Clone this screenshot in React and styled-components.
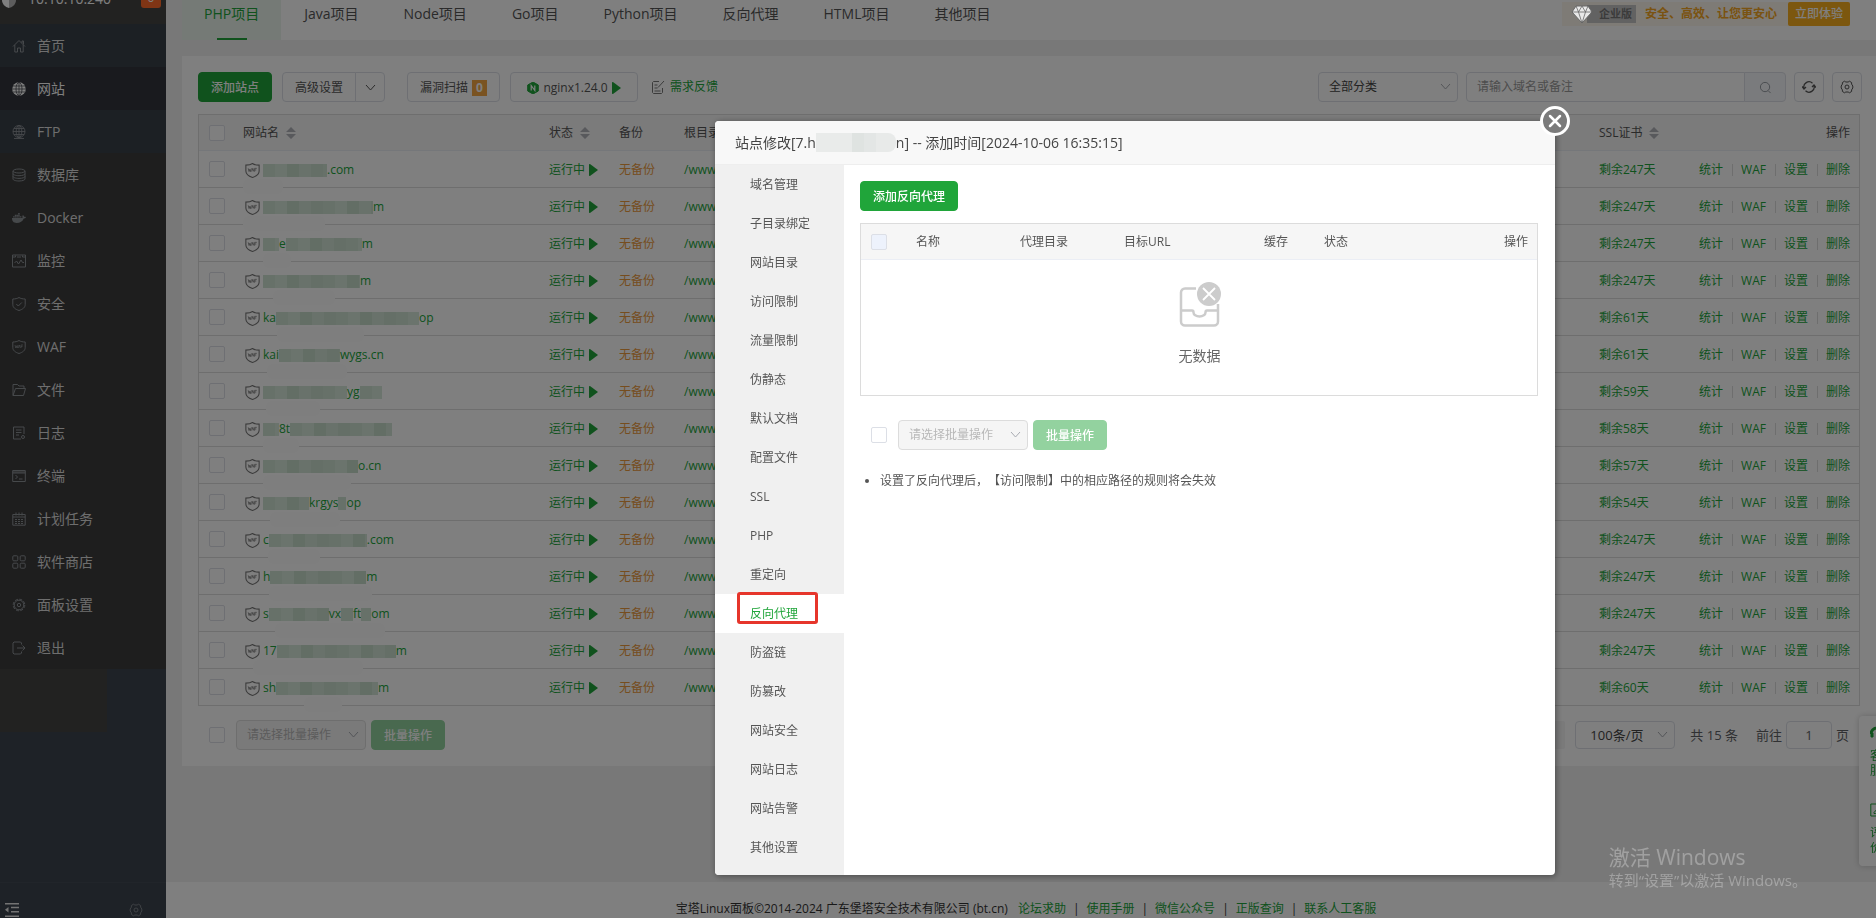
import React from 'react'
import styled, { createGlobalStyle } from "styled-components";
import { FaDocker } from "react-icons/fa";

const GlobalStyle = createGlobalStyle`
  * {
    box-sizing: border-box;
  }

  body {
    margin: 0;
    overflow: hidden;
    background: #f0f0f0;
    color: #555;
    font-family: "Open Sans", "Noto Sans CJK SC", sans-serif;
    font-size: 12px;
    line-height: 16px;
    text-spacing-trim: space-all;
  }

  button, input, select {
    font-family: inherit;
    font-size: 12px;
    line-height: 16px;
    color: inherit;
  }

  a {
    color: #20a53a;
    text-decoration: none;
  }

  ul {
    margin: 0;
    padding: 0;
    list-style: none;
  }
`;

const Shell = styled.div`
  display: flex;
  height: 100vh;
`;

/* ---------- sidebar ---------- */

const Sidebar = styled.aside`
  flex: none;
  width: 166px;
  display: flex;
  flex-direction: column;
  background: #3d454e;
`;

const ServerBar = styled.div`
  height: 24px;
  display: flex;
  align-items: flex-start;
  overflow: hidden;
  background: #454543;
  color: #fff;
  font-size: 14px;
`;

const ServerLogo = styled.svg`
  margin-left: 2px;
  margin-top: -6px;
`;

const ServerIp = styled.span`
  flex: 1;
  margin-left: 12px;
  margin-top: -9px;
`;

const ServerCount = styled.span`
  width: 20px;
  height: 20px;
  margin-right: 5px;
  margin-top: -12px;
  border-radius: 3px;
  background: #ff6a2a;
  font-size: 12px;
  line-height: 20px;
  text-align: center;
`;

const Nav = styled.nav`
  background: #3d3d3d;
`;

const NavLink = styled.a`
  display: flex;
  align-items: center;
  gap: 11px;
  height: 43px;
  padding-left: 12px;
  background: ${(p) => p.$bg || "transparent"};
  color: ${(p) => (p.$active ? "#fff" : "#dcdcdc")};
  font-size: 14px;

  svg {
    flex: none;
    color: ${(p) => (p.$active ? "#fff" : "#8d9297")};
  }
`;

const NavTail = styled.div`
  width: 107px;
  height: 63px;
  background: #454543;
`;

const SidebarFoot = styled.div`
  margin-top: auto;
  height: 36px;
  display: flex;
  align-items: flex-end;
  justify-content: space-between;
  padding: 0 23px 1px 5px;
  border-top: 1px solid #434b54;
  color: #e6e6e6;

  svg:last-child {
    color: #7d838a;
  }
`;

/* ---------- main area ---------- */

const Main = styled.main`
  flex: 1;
  min-width: 0;
  display: flex;
  flex-direction: column;
`;

const TabBar = styled.div`
  display: flex;
  justify-content: space-between;
  height: 40px;
  margin-left: 16px;
  padding-right: 26px;
  background: #fff;
`;

const Tabs = styled.div`
  display: flex;
  gap: 1px;
`;

const Tab = styled.a`
  display: flex;
  flex-direction: column;
  align-items: center;
  justify-content: space-between;
  padding: 0 22px;
  background: ${(p) => (p.$active ? "#eaf4ec" : "transparent")};
  color: ${(p) => (p.$active ? "#20a53a" : "#555")};
  font-size: 14px;
  line-height: 28px;

  &::after {
    content: "";
    width: 30px;
    height: 2px;
    background: ${(p) => (p.$active ? "#20a53a" : "transparent")};
  }
`;

const Upsell = styled.div`
  display: flex;
  align-items: center;
  height: 24px;
  margin-top: 2px;
  padding-left: 9px;
  background: #fdf6ec;
  color: #f5a623;
  font-weight: 700;

  > svg {
    z-index: 1;
    margin-right: -6px;
  }
`;

const Edition = styled.span`
  margin-right: 9px;
  padding: 0 4px 0 12px;
  background: #c4c4c4;
  color: #777;
  font-size: 11px;
  line-height: 18px;
`;

const TryButton = styled.button`
  height: 24px;
  margin-left: 11px;
  padding: 0 7px;
  border: 0;
  border-radius: 2px;
  background: #f9ae1e;
  color: #fff;
  font-weight: 500;
`;

const Card = styled.section`
  margin: 16px 0 0 16px;
  padding: 16px;
  background: #fff;
`;

const Toolbar = styled.div`
  display: flex;
  gap: 8px;
  margin: 0 -2px 12px 0;
`;

const Spacer = styled.div`
  flex: 1;
`;

const Button = styled.button`
  display: inline-flex;
  align-items: center;
  justify-content: center;
  gap: 4px;
  height: 30px;
  padding: 1px 12px 0;
  border: 1px solid #dcdfe6;
  border-radius: 4px;
  background: #fff;
  color: #555;
`;

const PrimaryButton = styled(Button)`
  border-color: #20a53a;
  background: #20a53a;
  color: #fff;
  font-weight: 500;

  &:disabled {
    border-color: #93d29f;
    background: #93d29f;
  }
`;

const IconButton = styled(Button)`
  width: 30px;
  padding: 0;
`;

const ButtonGroup = styled.div`
  display: flex;
  margin: 0 14px 0 2px;

  button:first-child {
    border-radius: 4px 0 0 4px;
  }

  button:last-child {
    margin-left: -1px;
    border-radius: 0 4px 4px 0;
  }
`;

const NginxButton = styled(Button)`
  width: 128px;
  margin: 0 5px 0 2px;
`;

const Count = styled.b`
  width: 15px;
  background: #f5a742;
  color: #fff;
  text-align: center;
`;

const Feedback = styled.a`
  display: flex;
  align-items: center;
  gap: 5px;

  svg {
    color: #777;
  }
`;

const SelectWrap = styled.div`
  position: relative;
  width: ${(p) => p.$width};

  select {
    appearance: none;
    width: 100%;
    height: ${(p) => p.$height || "30px"};
    padding: 0 10px;
    border: 1px solid #dcdfe6;
    border-radius: 4px;
    background: #fff;
    color: #444;
    opacity: 1;
  }

  select:disabled {
    background: #f5f5f5;
    border-color: #dcdcdc;
    color: #b8b8b8;
  }

  svg {
    position: absolute;
    right: 6px;
    top: 8px;
    color: #a8abb2;
    pointer-events: none;
  }
`;

const SearchBox = styled.div`
  display: flex;
  width: 320px;

  input {
    flex: 1;
    min-width: 0;
    padding: 0 10px;
    border: 1px solid #dcdfe6;
    border-radius: 4px 0 0 4px;
    background: #fff;
  }

  input::placeholder {
    color: #999;
  }

  button {
    width: 42px;
    margin-left: -1px;
    border-radius: 0 4px 4px 0;
    background: #f5f7fa;
    color: #8f949c;
  }
`;

const CheckBox = styled.input.attrs({ type: "checkbox" })`
  appearance: none;
  display: block;
  flex: none;
  width: 16px;
  height: 16px;
  margin: 0;
  border: 1px solid #dcdfe6;
  border-radius: 2px;
  background: ${(p) => (p.disabled ? "#edf2fc" : "#fff")};
`;

const Table = styled.table`
  width: 100%;
  table-layout: fixed;
  border-collapse: separate;
  border-spacing: 0;
  border: 1px solid #dcdcdc;
  border-bottom: 0;

  th, td {
    height: 37px;
    padding: 2px 8px 0;
    border-bottom: 1px solid #dcdcdc;
    font-weight: 400;
    text-align: left;
    white-space: nowrap;
  }

  th {
    height: 36px;
    padding-top: 0;
    border-bottom-color: #ebeef5;
    background: #f6f6f6;
    color: #555;
  }

  th:first-child, td:first-child {
    padding: 0 10px;
  }

  th:last-child, td:last-child {
    padding-right: 9px;
    text-align: right;
  }
`;

const Sortable = styled.span`
  display: flex;
  align-items: center;
  gap: 7px;
`;

const NameCell = styled.td`
  position: relative;
`;

const SiteName = styled.a`
  display: flex;
  align-items: center;
  padding-left: 2px;

  svg {
    flex: none;
    margin-right: 3px;
    color: #777;
  }
`;

const Mosaic = styled.span`
  flex: none;
  height: 13px;
  background: repeating-linear-gradient(
    90deg,
    #cfe3d3 0 12px,
    #d6e8da 12px 24px,
    #c6dccb 24px 36px,
    #d2e4d6 36px 48px,
    #cadfce 48px 60px
  );
`;

const Smear = styled.span`
  position: absolute;
  bottom: -7px;
  height: 15px;
  border-radius: 6px;
  background: #fdfdfd;
`;

const Running = styled.a`
  display: flex;
  align-items: center;
  gap: 4px;
`;

const Unsaved = styled.a`
  color: #ec9a3c;
`;

const Actions = styled.div`
  display: flex;
  justify-content: flex-end;

  a + a {
    margin-left: 9px;
    padding-left: 8px;
    border-left: 1px solid #dcdcdc;
  }

  a {
    height: 12px;
    line-height: 12px;
  }
`;

const TableFoot = styled.div`
  display: flex;
  align-items: center;
  gap: 5px;
  margin-top: ${(p) => p.$top};
  padding-left: 11px;
`;

const BatchSelect = styled(SelectWrap)`
  margin-left: 6px;
`;

const Pager = styled.div`
  display: flex;
  align-items: center;
  margin-left: auto;
  padding-right: 11px;
  color: #606266;
  font-size: 13px;

  select {
    padding-left: 14px;
    font-size: 13px;
  }

  svg {
    top: 7px;
  }

  input {
    width: 46px;
    height: 28px;
    margin: 0 4px;
    border: 1px solid #dcdfe6;
    border-radius: 4px;
    background: #fff;
    font-size: 13px;
    text-align: center;
  }
`;

const NextPage = styled.button`
  width: 28px;
  height: 28px;
  margin-right: 10px;
  border: 0;
  border-radius: 2px;
  background: #f4f4f5;
`;

const Total = styled.span`
  margin: 0 18px 0 15px;
`;

const Footer = styled.footer`
  flex: none;
  display: flex;
  justify-content: center;
  height: 36px;
  margin-top: auto;
  padding-top: 19px;
  padding-left: 10px;
  background: #fff;
  color: #333;

  a:first-of-type {
    margin-left: 10px;
  }

  a + a {
    margin-left: 7px;
  }

  a + a::before {
    content: "|";
    margin-right: 7px;
    color: #333;
  }
`;

/* ---------- layers over the page ---------- */

const SideDock = styled.div`
  position: fixed;
  right: -25px;
  bottom: 52px;
  width: 42px;
  height: 150px;
  padding: 10px 19px 0 11px;
  border-radius: 4px;
  background: #fff;
  box-shadow: 0 0 6px rgba(0, 0, 0, .2);
`;

const DockLink = styled.a`
  display: block;
  height: 77px;
  line-height: 15px;

  svg {
    display: block;
    margin-bottom: 8px;
  }
`;

const Mask = styled.div`
  position: fixed;
  inset: 0;
  background: rgba(0, 0, 0, .5);
`;

const Dialog = styled.div`
  position: fixed;
  left: 715px;
  top: 121px;
  width: 840px;
  border-radius: 4px;
  background: #fff;
  box-shadow: 1px 1px 6px rgba(0, 0, 0, .4);
`;

const DialogTitle = styled.h1`
  display: flex;
  align-items: center;
  height: 44px;
  margin: 0;
  padding: 0 20px;
  border-bottom: 1px solid #eee;
  border-radius: 4px 4px 0 0;
  background: #f8f8f8;
  color: #444;
  font-size: 14px;
  font-weight: 400;
`;

const TitleMosaic = styled.span`
  width: 80px;
  height: 19px;
  border-radius: 0 8px 8px 0;
  background: linear-gradient(90deg, #e9ebea 0 36px, #dfe3e1 36px 48px, #e3e6e5 48px 60px, #e8eae9 60px);
`;

const CloseButton = styled.button`
  position: absolute;
  top: -15px;
  right: -15px;
  width: 30px;
  height: 30px;
  padding: 0;
  border: 3px solid #fff;
  border-radius: 50%;
  background: #7b7b7b;
  color: #fff;

  svg {
    display: block;
    margin: 0 auto;
  }
`;

const DialogBody = styled.div`
  display: flex;
`;

const Menu = styled.ul`
  width: 129px;
  padding-bottom: 8px;
  border-radius: 0 0 0 4px;
  background: #f0f0f0;
`;

const MenuItem = styled.li`
  position: relative;
  background: ${(p) => (p.$active ? "#fff" : "transparent")};

  a {
    display: block;
    padding-left: 35px;
    color: ${(p) => (p.$active ? "#20a53a" : "#555")};
    line-height: 39px;
  }
`;

const Highlight = styled.span`
  position: absolute;
  left: 22px;
  top: -2px;
  width: 81px;
  height: 32px;
  border: 3px solid #e6352b;
  border-radius: 3px;
  pointer-events: none;
`;

const Pane = styled.div`
  flex: 1;
  padding: 16px 17px 16px 16px;
`;

const ProxyTable = styled(Table)`
  margin-top: 12px;

  td {
    height: 136px;
    text-align: center !important;
    vertical-align: top;
  }
`;

const Empty = styled.div`
  display: flex;
  flex-direction: column;
  align-items: center;
  gap: 20px;
  padding-top: 22px;
  color: #666;
  font-size: 14px;
`;

const Notes = styled.ul`
  margin-top: 23px;
  padding-left: 20px;
  list-style: disc;
`;

const Watermark = styled.div`
  position: fixed;
  right: 69px;
  bottom: 28px;
  color: rgba(255, 255, 255, .3);
  font-size: 15px;
  line-height: 20px;

  p {
    margin: 0;
  }

  p:first-child {
    font-size: 21px;
    line-height: 26px;
  }
`;

/* ---------- icons ---------- */

const Icon = ({ size = 14, children, ...rest }) => (
  <svg width={size} height={size} viewBox="0 0 14 14" fill="none" stroke="currentColor" strokeWidth="1" aria-hidden="true" {...rest}>
    {children}
  </svg>
);

const Gear = ({ size = 14 }) => (
  <Icon size={size}>
    <path d="M4.6 1.2 5.8 2h2.4l1.2-.8 2.2 1.3v1.6L12.8 6v2l-1.2 1.9v1.6l-2.2 1.3-1.2-.8H5.8l-1.2.8-2.2-1.3V9.9L1.200 8V6l1.200-1.900V2.500z" />
    <circle cx="7" cy="7" r="2" />
  </Icon>
);

const shieldPath = "M7 .5C5.500 1.600 3 2 .8 2v5.500c0 3 2.500 4.800 6.200 6 3.700-1.200 6.200-3 6.200-6V2C11 2 8.500 1.600 7 .5z";

const WafShield = ({ size = 14 }) => (
  <Icon size={size}>
    <path d={shieldPath} />
    <path d="M3 5l.8 3 .7-2.200L5.200 8 6 5M6.300 8l1-3 1 3M9 8V5h2M9 6.500h1.500" strokeWidth=".7" />
  </Icon>
);

const Chevron = () => (
  <svg width="13" height="13" viewBox="0 0 13 13" fill="none" stroke="currentColor" aria-hidden="true">
    <path d="M2 4l4.500 5L11 4" />
  </svg>
);

const Play = () => (
  <svg width="9" height="12" viewBox="0 0 9 12" fill="#20a53a" aria-hidden="true">
    <path d="M0 .3 1 0l8 6-8 6-1-.3z" />
  </svg>
);

const SortArrows = () => (
  <svg width="10" height="12" viewBox="0 0 10 12" fill="#b0b3b9" aria-hidden="true">
    <path d="M5 0l5 5H0zM5 12 0 7h10z" />
  </svg>
);

const menu = [
  { label: "首页", bg: "#384049", icon: <Icon><path d="M1 7.500 7 1.500l6 6M2.800 6v7h2.700V9h3v4h2.700V6M10 4V2h1.500v3.500" /></Icon> },
  { label: "网站", bg: "#32343c", active: true, icon: (
    <svg width="14" height="14" viewBox="0 0 14 14" fill="none" stroke="#32343c" aria-hidden="true">
      <circle cx="7" cy="7" r="6.800" fill="#fff" stroke="none" />
      <ellipse cx="7" cy="7" rx="3" ry="6.500" strokeWidth=".7" />
      <path d="M7 0v14M0 7h14M1 4h12M1 10h12" strokeWidth=".7" />
    </svg>
  ) },
  { label: "FTP", bg: "#384049", icon: <Icon strokeWidth=".9"><circle cx="7" cy="6.500" r="6" /><ellipse cx="7" cy="6.500" rx="2.800" ry="6" /><path d="M7 .5v12M1 6.500h12M2 3.500h10M2 9.500h10M2 13.500h10" /></Icon> },
  { label: "数据库", icon: <Icon><ellipse cx="7" cy="3" rx="6" ry="2" /><path d="M1 3v8c0 1.100 2.700 2 6 2s6-.9 6-2V3M1 5.700c0 1.100 2.700 2 6 2s6-.9 6-2M1 8.400c0 1.100 2.700 2 6 2s6-.9 6-2" /></Icon> },
  { label: "Docker", icon: <FaDocker size={14} /> },
  { label: "监控", icon: <Icon><path d="M.5 1h13v12H.5zM.5 3h3V1.500M10.500 1.500V3h3M2.500 9l2-2 2 3 2.500-4 1.500 2.500h1.500M5 3h4" /></Icon> },
  { label: "安全", icon: <Icon><path d={shieldPath} /><path d="M4.300 7l2 2 3.500-3.500" /></Icon> },
  { label: "WAF", icon: <WafShield /> },
  { label: "文件", icon: <Icon><path d="M1 12.500V1.500h4.500L7 3h5v2.500M1 12.500h10.500L13.500 5.500h-10z" /></Icon> },
  { label: "日志", icon: <Icon><path d="M12 8V1H1.500v12H9M4 4h5.500M4 6.500h5.500M4 9h3" /><circle cx="11" cy="11" r="1.500" /></Icon> },
  { label: "终端", icon: <Icon><path d="M.7 1.500h12.600v11H.7zM.7 3h12.600M.7 4h12.600M3.500 6l2 2-2 2M7 10h3.500" /></Icon> },
  { label: "计划任务", icon: <Icon><path d="M.8 2.500h12.400v10.700H.8zM.8 5h12.400M4 .5v3M7 .5v3M10 .5v3M3 7.500h2M6 7.500h2M9 7.500h2M3 9.500h2M6 9.500h2M9 9.500h2M3 11.500h2M6 11.500h2M9 11.500h2" /></Icon> },
  { label: "软件商店", icon: <Icon><rect x=".8" y=".8" width="5" height="5" rx="1" /><rect x="8.200" y=".8" width="5" height="5" rx="1" /><rect x=".8" y="8.200" width="5" height="5" rx="1" /><rect x="8.200" y="8.200" width="5" height="5" rx="1" /></Icon> },
  { label: "面板设置", icon: <Icon><circle cx="7" cy="7" r="5.800" strokeDasharray="3 1.500" /><circle cx="7" cy="7" r="4.800" /><circle cx="7" cy="7" r="1.700" /></Icon> },
  { label: "退出", icon: <Icon><path d="M9.500 3.500V2l-1-1H2L1 2v10l1 1h6.500l1-1v-1.500M5 7h8M10.500 4.500 13 7l-2.500 2.500" /></Icon> },
];

const projectTabs = ["PHP项目", "Java项目", "Node项目", "Go项目", "Python项目", "反向代理", "HTML项目", "其他项目"];

// name: strings are visible text, numbers are the width of a hidden part
// smear: left edge and width of the pale stroke over the row line
const sites = [
  { name: [64, ".com"], smear: [8, 40], ssl: "剩余247天" },
  { name: [110, "m"], smear: [8, 82], ssl: "剩余247天" },
  { name: [16, "e", 76, "m"], smear: [28, 28], ssl: "剩余247天" },
  { name: [97, "m"], smear: [38, 62], ssl: "剩余247天" },
  { name: ["ka", 143, "op"], smear: [42, 87], ssl: "剩余61天" },
  { name: ["kai", 61, "wygs.cn"], smear: [32, 80], ssl: "剩余61天" },
  { name: [84, "yg", 22], smear: [31, 54], ssl: "剩余59天" },
  { name: [16, "8t", 102], smear: [28, 36], ssl: "剩余58天" },
  { name: [95, "o.cn"], smear: [28, 88], ssl: "剩余57天" },
  { name: [46, "krgys", 8, "op"], smear: [35, 70], ssl: "剩余54天" },
  { name: ["c", 98, ".com"], smear: [33, 52], ssl: "剩余247天" },
  { name: ["h", 96, "m"], smear: [34, 103], ssl: "剩余247天" },
  { name: ["s", 60, "vx", 12, "ft", 10, "om"], smear: [40, 110], ssl: "剩余247天" },
  { name: ["17", 119, "m"], smear: [18, 110], ssl: "剩余247天" },
  { name: ["sh", 102, "m"], smear: [69, 38], ssl: "剩余60天" },
];

const settingsMenu = [
  "域名管理", "子目录绑定", "网站目录", "访问限制", "流量限制", "伪静态",
  "默认文档", "配置文件", "SSL", "PHP", "重定向", "反向代理",
  "防盗链", "防篡改", "网站安全", "网站日志", "网站告警", "其他设置",
];

const footLinks = ["论坛求助", "使用手册", "微信公众号", "正版查询", "联系人工客服"];

/* ---------- components ---------- */

const BatchBar = ({ top, children }) => (
  <TableFoot $top={top}>
    <CheckBox aria-label="全选" />
    <BatchSelect $width="130px">
      <select disabled aria-label="批量操作">
        <option>请选择批量操作</option>
      </select>
      <Chevron />
    </BatchSelect>
    <PrimaryButton disabled>批量操作</PrimaryButton>
    {children}
  </TableFoot>
);

const SideNav = () => (
  <Sidebar>
    <ServerBar>
      <ServerLogo width="14" height="14" viewBox="0 0 14 14" aria-hidden="true">
        <path d="M0 0h7v14C3 13 0 10 0 6z" fill="#fff" />
        <path d="M7 0h7v6c0 4-3 7-7 8z" fill="#bbb" />
      </ServerLogo>
      <ServerIp>10.10.10.240</ServerIp>
      <ServerCount>0</ServerCount>
    </ServerBar>
    <Nav>
      {menu.map((item) => (
        <NavLink key={item.label} href="#" $bg={item.bg} $active={item.active}>
          {item.icon}
          {item.label}
        </NavLink>
      ))}
    </Nav>
    <NavTail />
    <SidebarFoot>
      <Icon><path d="M0 .8h14M6 4.500h8M6 8.800h8M0 13.200h14" strokeWidth="1.500" /><path d="M0 6.700 3.500 4v5.400z" fill="currentColor" stroke="none" /></Icon>
      <Gear />
    </SidebarFoot>
  </Sidebar>
);

const SiteToolbar = () => (
  <Toolbar>
    <PrimaryButton>添加站点</PrimaryButton>
    <ButtonGroup>
      <Button>高级设置</Button>
      <IconButton aria-label="更多设置"><Chevron /></IconButton>
    </ButtonGroup>
    <Button>漏洞扫描 <Count>0</Count></Button>
    <NginxButton>
      <svg width="12" height="12" viewBox="0 0 12 12" aria-hidden="true">
        <path d="M6 0l5.300 3v6L6 12 .7 9V3z" fill="#20a53a" stroke="#20a53a" />
        <path d="M4.200 8.500v-5l3.600 5v-5" fill="none" stroke="#fff" strokeWidth="1.200" />
      </svg>
      nginx1.24.0
      <Play />
    </NginxButton>
    <Feedback href="#">
      <Icon><path d="M8 1.500H2.500l-1 1v10l1 1h8l1-1V8M3.500 5h3M3.500 8h3M3.500 11h6M7 7.500 13 1" /></Icon>
      需求反馈
    </Feedback>
    <Spacer />
    <SelectWrap $width="140px">
      <select aria-label="分类">
        <option>全部分类</option>
      </select>
      <Chevron />
    </SelectWrap>
    <SearchBox>
      <input type="text" aria-label="搜索" placeholder="请输入域名或备注" />
      <Button aria-label="搜索">
        <Icon size={13}><circle cx="6.500" cy="6.500" r="5" /><path d="M10 10.500 12.500 13" /></Icon>
      </Button>
    </SearchBox>
    <IconButton aria-label="刷新">
      <Icon strokeWidth="1.300"><path d="M2 8.500A5.200 5.200 0 0 1 10.500 3.200M12 5.500A5.200 5.200 0 0 1 3.500 10.800M0 6.500l2 2.500 2-2M14 7.500 12 5l-2 2" /></Icon>
    </IconButton>
    <IconButton aria-label="设置"><Gear /></IconButton>
  </Toolbar>
);

const SiteTable = () => (
  <Table>
    <colgroup>
      <col style={{ width: 36 }} />
      <col style={{ width: 306 }} />
      <col style={{ width: 70 }} />
      <col style={{ width: 65 }} />
      <col />
      <col style={{ width: 96 }} />
      <col style={{ width: 172 }} />
    </colgroup>
    <thead>
      <tr>
        <th><CheckBox aria-label="全选" /></th>
        <th><Sortable>网站名 <SortArrows /></Sortable></th>
        <th><Sortable>状态 <SortArrows /></Sortable></th>
        <th>备份</th>
        <th>根目录</th>
        <th><Sortable>SSL证书 <SortArrows /></Sortable></th>
        <th>操作</th>
      </tr>
    </thead>
    <tbody>
      {sites.map((site, i) => (
        <tr key={i}>
          <td><CheckBox aria-label="选择站点" /></td>
          <NameCell>
            <SiteName href="#">
              <WafShield size={15} />
              {site.name.map((part, n) =>
                typeof part === "number"
                  ? <Mosaic key={n} style={{ width: part }} />
                  : <span key={n}>{part}</span>
              )}
            </SiteName>
            <Smear style={{ left: site.smear[0], width: site.smear[1] }} />
          </NameCell>
          <td><Running href="#">运行中 <Play /></Running></td>
          <td><Unsaved href="#">无备份</Unsaved></td>
          <td><a href="#">/www</a></td>
          <td><a href="#">{site.ssl}</a></td>
          <td>
            <Actions>
              <a href="#">统计</a>
              <a href="#">WAF</a>
              <a href="#">设置</a>
              <a href="#">删除</a>
            </Actions>
          </td>
        </tr>
      ))}
    </tbody>
  </Table>
);

const SiteDialog = () => (
  <Dialog role="dialog" aria-labelledby="site-title">
    <DialogTitle id="site-title">
      站点修改[7.h<TitleMosaic />n] -- 添加时间[2024-10-06 16:35:15]
    </DialogTitle>
    <CloseButton aria-label="关闭">
      <svg width="14" height="14" viewBox="0 0 14 14" stroke="#fff" strokeWidth="2.500" strokeLinecap="round" aria-hidden="true">
        <path d="M2 2l10 10M12 2 2 12" />
      </svg>
    </CloseButton>
    <DialogBody>
      <Menu>
        {settingsMenu.map((label) => (
          <MenuItem key={label} $active={label === "反向代理"}>
            <a href="#">{label}</a>
            {label === "反向代理" && <Highlight />}
          </MenuItem>
        ))}
      </Menu>
      <Pane>
        <PrimaryButton>添加反向代理</PrimaryButton>
        <ProxyTable>
          <colgroup>
            <col style={{ width: 47 }} />
            <col style={{ width: 104 }} />
            <col style={{ width: 104 }} />
            <col style={{ width: 140 }} />
            <col style={{ width: 60 }} />
            <col />
            <col style={{ width: 80 }} />
          </colgroup>
          <thead>
            <tr>
              <th><CheckBox disabled aria-label="全选" /></th>
              <th>名称</th>
              <th>代理目录</th>
              <th>目标URL</th>
              <th>缓存</th>
              <th>状态</th>
              <th>操作</th>
            </tr>
          </thead>
          <tbody>
            <tr>
              <td colSpan="7">
                <Empty>
                  <svg width="44" height="46" viewBox="0 0 44 46" fill="none" stroke="#ccc" strokeWidth="2.500" aria-hidden="true">
                    <path d="M18 6.500H7a4 4 0 0 0-4 4v29a4 4 0 0 0 4 4h29a4 4 0 0 0 4-4V22" />
                    <path d="M3 28.500h11c1 0 1.500 1 1.500 2 0 2 2.500 4 6 4s6-2 6-4c0-1 .5-2 1.500-2h11" />
                    <circle cx="31" cy="12" r="12" fill="#ccc" stroke="none" />
                    <path d="M25 6l12 12M37 6 25 18" stroke="#fff" strokeWidth="1.800" />
                  </svg>
                  无数据
                </Empty>
              </td>
            </tr>
          </tbody>
        </ProxyTable>
        <BatchBar top="24px" />
        <Notes>
          <li>设置了反向代理后，【访问限制】中的相应路径的规则将会失效</li>
        </Notes>
      </Pane>
    </DialogBody>
  </Dialog>
);

const App = () => {
  return (
    <>
      <GlobalStyle />
      <Shell>
        <SideNav />
        <Main>
          <TabBar>
            <Tabs>
              {projectTabs.map((label, i) => (
                <Tab key={label} href="#" $active={i === 0}>{label}</Tab>
              ))}
            </Tabs>
            <Upsell>
              <svg width="22" height="19" viewBox="0 0 22 19" fill="none" stroke="#666" strokeLinejoin="round" aria-hidden="true">
                <path d="M5 1h12l4 6-10 11L1 7z" fill="#e8e8e8" />
                <path d="M1 7h20M5 1l2.500 6L11 18l3.500-11L17 1M7.500 7 11 1l3.500 6" strokeWidth=".8" />
              </svg>
              <Edition>企业版</Edition>
              安全、高效、让您更安心
              <TryButton>立即体验</TryButton>
            </Upsell>
          </TabBar>
          <Card>
            <SiteToolbar />
            <SiteTable />
            <BatchBar top="14px">
              <Pager>
                <NextPage aria-label="下一页" />
                <SelectWrap $width="100px" $height="28px">
                  <select aria-label="每页条数">
                    <option>100条/页</option>
                  </select>
                  <Chevron />
                </SelectWrap>
                <Total>共 15 条</Total>
                <label htmlFor="page">前往</label>
                <input id="page" type="text" defaultValue="1" />
                页
              </Pager>
            </BatchBar>
          </Card>
          <Footer>
            宝塔Linux面板©2014-2024 广东堡塔安全技术有限公司 (bt.cn)
            {footLinks.map((label) => <a key={label} href="#">{label}</a>)}
          </Footer>
        </Main>
      </Shell>
      <SideDock>
        <DockLink href="#">
          <Icon><path d="M1 8a6 6 0 0 1 12 0" strokeWidth="3" /><path d="M1 7v4h2V7z" fill="currentColor" /></Icon>
          客服
        </DockLink>
        <DockLink href="#">
          <Icon><path d="M.8 1h12.400v12H.8zM4 9.500 9 4l1.500 1.500-5 5H4z" /></Icon>
          评价
        </DockLink>
      </SideDock>
      <Mask />
      <SiteDialog />
      <Watermark>
        <p>激活 Windows</p>
        <p>转到“设置”以激活 Windows。</p>
      </Watermark>
    </>
  );
}

export default App
